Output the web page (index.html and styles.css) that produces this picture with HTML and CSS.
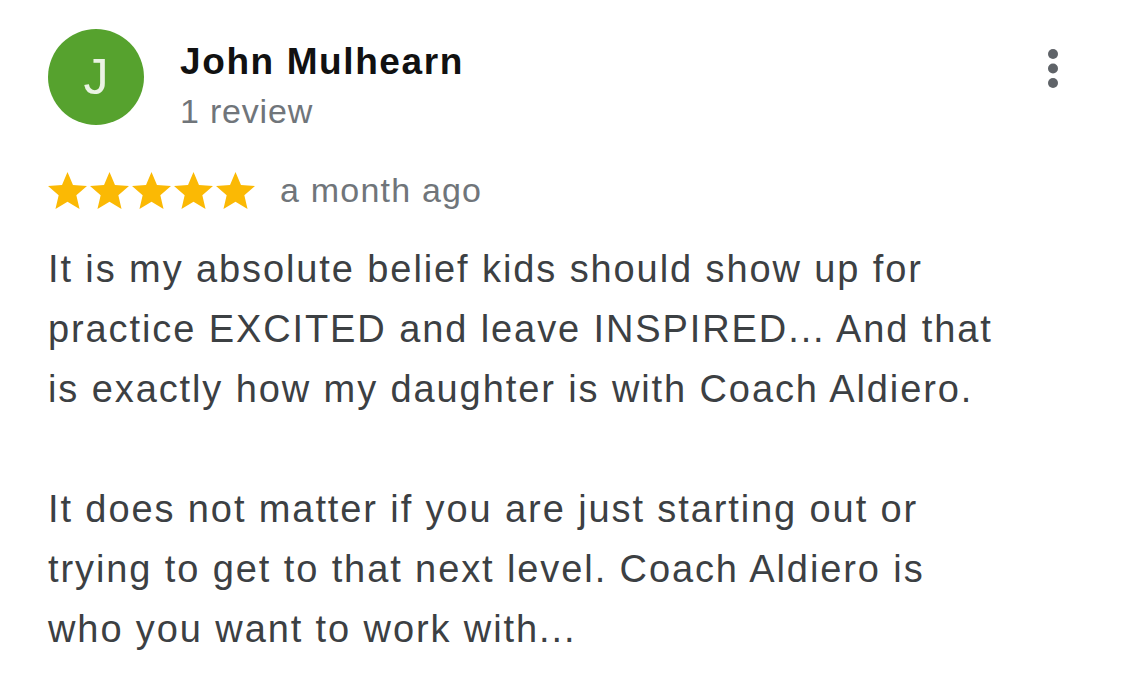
FILE: index.html
```html
<!DOCTYPE html>
<html lang="en">
<head>
<meta charset="utf-8">
<title>Review</title>
<link rel="stylesheet" href="styles.css">
</head>
<body>
<div class="review">
  <div class="header">
    <div class="avatar">J</div>
    <div class="author">
      <div class="name">John Mulhearn</div>
      <div class="count">1 review</div>
    </div>
    <button class="menu" aria-label="More options">
      <svg width="12" height="42" viewBox="0 0 12 42"><circle cx="6" cy="6" r="5"/><circle cx="6" cy="20.5" r="5"/><circle cx="6" cy="35" r="5"/></svg>
    </button>
  </div>
  <div class="rating">
    <div class="stars">
      <svg class="star" viewBox="2 2 20 19"><path d="M12 17.27L18.18 21l-1.64-7.03L22 9.24l-7.19-.61L12 2 9.19 8.63 2 9.24l5.46 4.73L5.82 21z"/></svg>
      <svg class="star" viewBox="2 2 20 19"><path d="M12 17.27L18.18 21l-1.64-7.03L22 9.24l-7.19-.61L12 2 9.19 8.63 2 9.24l5.46 4.73L5.82 21z"/></svg>
      <svg class="star" viewBox="2 2 20 19"><path d="M12 17.27L18.18 21l-1.64-7.03L22 9.24l-7.19-.61L12 2 9.19 8.63 2 9.24l5.46 4.73L5.82 21z"/></svg>
      <svg class="star" viewBox="2 2 20 19"><path d="M12 17.27L18.18 21l-1.64-7.03L22 9.24l-7.19-.61L12 2 9.19 8.63 2 9.24l5.46 4.73L5.82 21z"/></svg>
      <svg class="star" viewBox="2 2 20 19"><path d="M12 17.27L18.18 21l-1.64-7.03L22 9.24l-7.19-.61L12 2 9.19 8.63 2 9.24l5.46 4.73L5.82 21z"/></svg>
    </div>
    <span class="date">a month ago</span>
  </div>
  <div class="text">
    <p>It is my absolute belief kids should show up for<br>practice EXCITED and leave INSPIRED... And that<br>is exactly how my daughter is with Coach Aldiero.</p>
    <p>It does not matter if you are just starting out or<br>trying to get to that next level. Coach Aldiero is<br>who you want to work with...</p>
  </div>
</div>
</body>
</html>
```
FILE: styles.css
```css
html, body {
  margin: 0;
  padding: 0;
  background: #ffffff;
}
body {
  font-family: "Liberation Sans", Arial, Helvetica, sans-serif;
  width: 1125px;
  height: 697px;
  overflow: hidden;
}
.review {
  padding: 29px 0 0 48px;
}
.header {
  display: flex;
  align-items: flex-start;
}
.avatar {
  width: 96px;
  height: 96px;
  border-radius: 50%;
  background: #56a22e;
  color: #eaf3e4;
  font-size: 50px;
  font-weight: normal;
  display: flex;
  align-items: center;
  justify-content: center;
  flex-shrink: 0;
  line-height: 1;
}
.author {
  margin-left: 36px;
  flex: 1;
}
.name {
  font-size: 37px;
  font-weight: bold;
  color: #111111;
  line-height: 44px;
  margin-top: 11px;
  letter-spacing: 1.6px;
}
.count {
  font-size: 34px;
  color: #70757a;
  line-height: 44px;
  margin-top: 5px;
  letter-spacing: 0.8px;
}
.menu {
  background: none;
  border: 0;
  padding: 0;
  margin: 19px 66px 0 0;
  fill: #5f6368;
  display: flex;
}
.rating {
  display: flex;
  align-items: center;
  margin-top: 38px;
}
.stars {
  display: flex;
  gap: 3px;
}
.star {
  width: 39px;
  height: 37px;
  fill: #fbb904;
}
.date {
  margin-left: 25px;
  font-size: 34px;
  color: #70757a;
  letter-spacing: 1.2px;
}
.text {
  margin-top: 29px;
  color: #3c4043;
  font-size: 38px;
  line-height: 60px;
  letter-spacing: 1.9px;
}
.text p {
  margin: 0 0 60px 0;
}
```
